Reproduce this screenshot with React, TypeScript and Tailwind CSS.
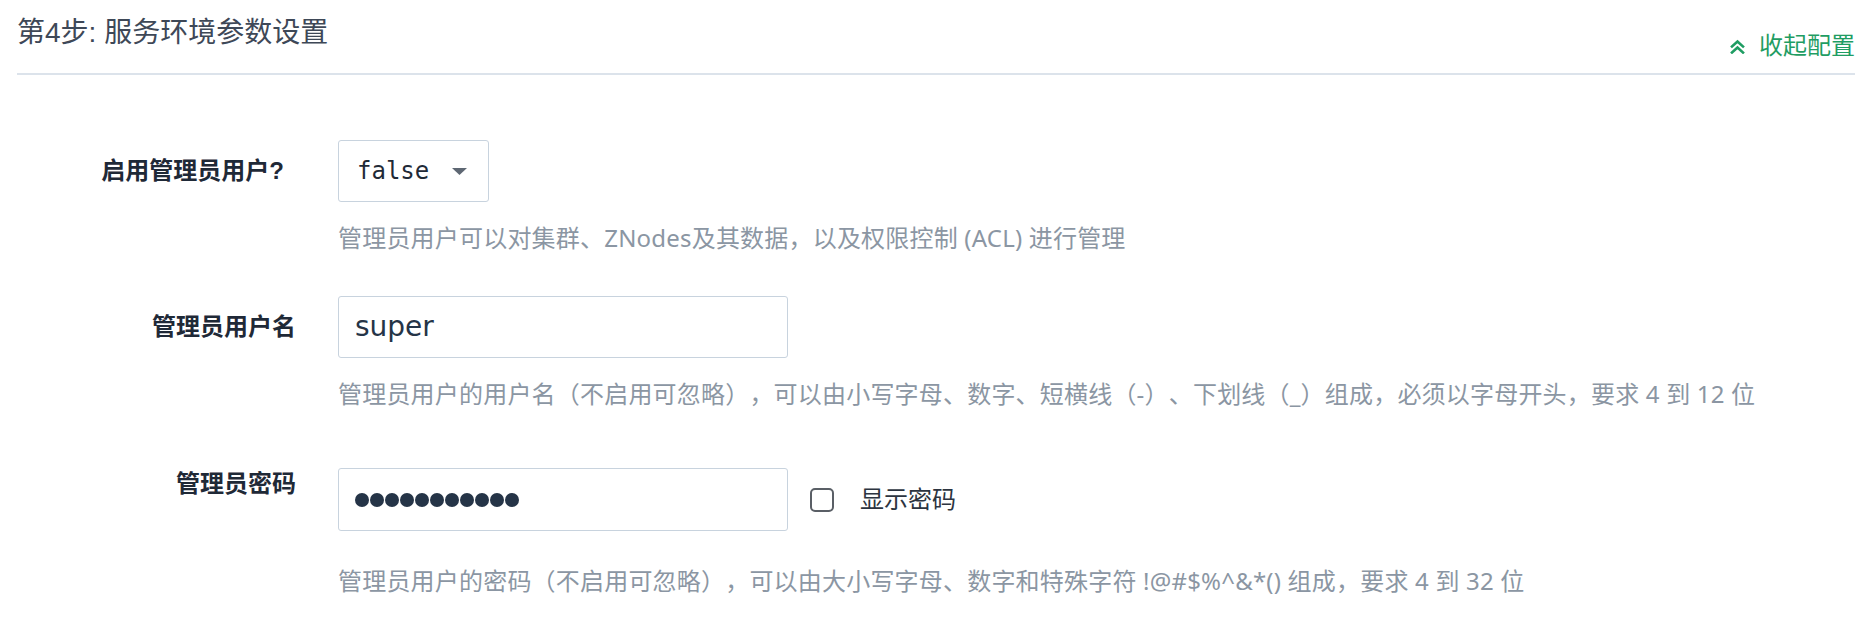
import { useState } from 'react'

const CJK = '"Liberation Sans", "Noto Sans CJK SC", sans-serif'
const HELP = '"Noto Sans", "Noto Sans CJK SC", sans-serif'

function Caret() {
  return (
    <svg className="h-[7px] w-[15px]" viewBox="0 0 15 7">
      <path d="M0 0h15L7.5 7z" fill="#5e6773" />
    </svg>
  )
}

function ChevronsUp() {
  return (
    <svg className="h-[15px] w-[15px]" viewBox="0 0 15 15" fill="none" stroke="#1f9d63" strokeWidth="2.6" strokeLinecap="square">
      <path d="M2 7.5l5.5-5 5.5 5" />
      <path d="M2 13.5l5.5-5 5.5 5" />
    </svg>
  )
}

function Help({ children, className }: { children: React.ReactNode; className: string }) {
  return (
    <p className={`ml-[321px] text-[24px] leading-[32px] tracking-[0.2px] text-[#8b96a3] ${className}`} style={{ fontFamily: HELP }}>
      {children}
    </p>
  )
}

export default function App() {
  const [showPwd, setShowPwd] = useState(false)

  return (
    <div className="min-h-screen bg-white pl-[17px] pr-[11px] [text-spacing-trim:space-all]" style={{ fontFamily: CJK }}>
      {/* header */}
      <div className="flex h-[75px] items-start justify-between border-b-2 border-[#dce3eb]">
        <h2 className="pt-[13px] text-[28px] leading-[40px] font-normal text-[#3e4857]">第4步: 服务环境参数设置</h2>
        <button className="mt-[30px] flex items-center gap-[14px] text-[24px] leading-[32px] text-[#1f9d63]">
          <ChevronsUp />
          <span>收起配置</span>
        </button>
      </div>

      {/* row 1 */}
      <div className="mt-[65px] flex items-center">
        <label className="w-[279px] pr-[12px] text-right text-[24px] leading-[32px] font-bold text-[#1f2937]">启用管理员用户?</label>
        <div className="ml-[42px] flex h-[62px] w-[151px] items-center justify-between rounded-[3px] border border-[#c8d3de] pl-[18px] pr-[21px]">
          <span className="text-[24px] text-[#1f2a37]" style={{ fontFamily: '"DejaVu Sans Mono", monospace' }}>false</span>
          <Caret />
        </div>
      </div>
      <Help className="mt-[20px]">管理员用户可以对集群、ZNodes及其数据，以及权限控制 (ACL) 进行管理</Help>

      {/* row 2 */}
      <div className="mt-[42px] flex items-center">
        <label className="w-[279px] text-right text-[24px] leading-[32px] font-bold text-[#1f2937]">管理员用户名</label>
        <div className="ml-[42px] flex h-[62px] w-[450px] items-center rounded-[3px] border border-[#c8d3de] px-[16px]">
          <span className="text-[28px] text-[#253447]" style={{ fontFamily: '"DejaVu Sans", sans-serif' }}>super</span>
        </div>
      </div>
      <Help className="mt-[20px]">
        管理员用户的用户名（不启用可忽略），可以由小写字母、数字、短横线（-）、下划线（_）组成，必须以字母开头，要求 4 到 12 位
      </Help>

      {/* row 3 */}
      <div className="mt-[58px] flex items-start">
        <label className="w-[279px] text-right text-[24px] leading-[32px] font-bold text-[#1f2937]">管理员密码</label>
        <div className="ml-[42px] flex h-[63px] w-[450px] items-center gap-[1px] rounded-[3px] border border-[#c8d3de] px-[16px]">
          {Array.from({ length: 11 }).map((_, i) => (
            <span key={i} className="h-[14px] w-[14px] rounded-full bg-[#253447]" />
          ))}
        </div>
        <label className="ml-[22px] flex h-[63px] items-center gap-[26px] text-[24px] text-[#2c3440]">
          <span
            onClick={() => setShowPwd(!showPwd)}
            className="h-[24px] w-[24px] rounded-[5px] border-2 border-[#5a5f66] bg-white"
          />
          <span>显示密码</span>
        </label>
      </div>
      <Help className="mt-[34px]">
        管理员用户的密码（不启用可忽略），可以由大小写字母、数字和特殊字符 !@#$%^&amp;*() 组成，要求 4 到 32 位
      </Help>
    </div>
  )
}
